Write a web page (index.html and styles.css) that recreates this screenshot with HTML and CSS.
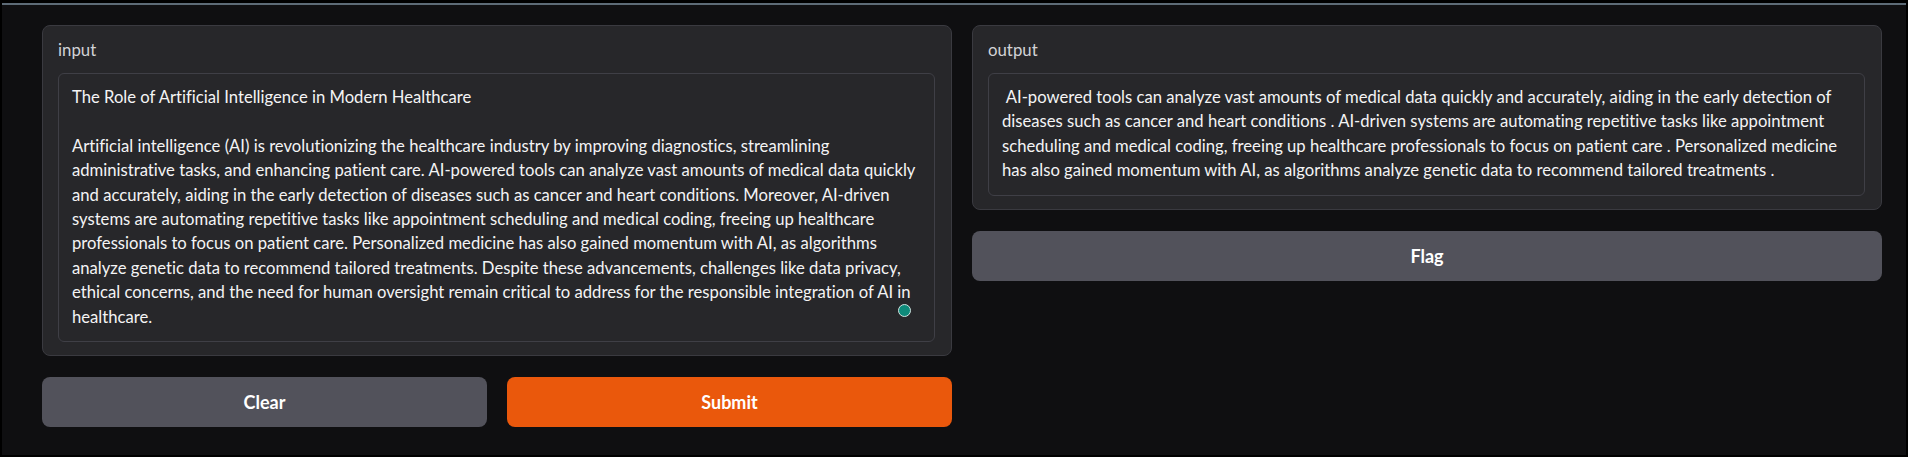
FILE: index.html
```html
<!DOCTYPE html>
<html lang="en">
<head>
<meta charset="utf-8">
<title>Gradio Interface</title>
<link rel="stylesheet" href="styles.css">
</head>
<body>
<div class="frame">
  <div class="topline"></div>
  <main class="app">
    <section class="column">
      <div class="block">
        <div class="label">input</div>
        <div class="textbox textbox-input">
          <div class="text">The Role of Artificial Intelligence in Modern Healthcare<br><br>Artificial intelligence (AI) is revolutionizing the healthcare industry by improving diagnostics, streamlining<br>administrative tasks, and enhancing patient care. AI-powered tools can analyze vast amounts of medical data quickly<br>and accurately, aiding in the early detection of diseases such as cancer and heart conditions. Moreover, AI-driven<br>systems are automating repetitive tasks like appointment scheduling and medical coding, freeing up healthcare<br>professionals to focus on patient care. Personalized medicine has also gained momentum with AI, as algorithms<br>analyze genetic data to recommend tailored treatments. Despite these advancements, challenges like data privacy,<br>ethical concerns, and the need for human oversight remain critical to address for the responsible integration of AI in<br>healthcare.</div>
          <span class="dot"></span>
        </div>
      </div>
      <div class="btn-row">
        <button class="btn btn-secondary">Clear</button>
        <button class="btn btn-primary">Submit</button>
      </div>
    </section>
    <section class="column">
      <div class="block">
        <div class="label">output</div>
        <div class="textbox textbox-output">
          <div class="text"> AI-powered tools can analyze vast amounts of medical data quickly and accurately, aiding in the early detection of<br>diseases such as cancer and heart conditions . AI-driven systems are automating repetitive tasks like appointment<br>scheduling and medical coding, freeing up healthcare professionals to focus on patient care . Personalized medicine<br>has also gained momentum with AI, as algorithms analyze genetic data to recommend tailored treatments .</div>
        </div>
      </div>
      <button class="btn btn-secondary btn-full">Flag</button>
    </section>
  </main>
</div>
</body>
</html>
```
FILE: styles.css
```css
* { box-sizing: border-box; }
html, body { margin: 0; padding: 0; background: #000; }
body {
  font-family: Lato, "Open Sans", sans-serif;
  font-variant-ligatures: none;
  color: #f4f4f5;
}
.frame {
  width: 1908px;
  height: 457px;
  background: #0f0f11;
  border: 2px solid #000;
  border-top-width: 3px;
  overflow: hidden;
}
.topline {
  height: 2px;
  background: #5d6b77;
}
.app {
  display: grid;
  grid-template-columns: 910px 910px;
  column-gap: 20px;
  padding: 20px 24px 0 40px;
  align-items: start;
}
.column {
  display: flex;
  flex-direction: column;
  gap: 21px;
}
.block {
  background: #27272a;
  border: 1px solid #3a3a40;
  border-radius: 8px;
  padding: 14px 16px 13px 15px;
}
.label {
  font-size: 16.8px;
  line-height: 20px;
  color: #d2d2d6;
  margin-bottom: 13px;
}
.textbox {
  position: relative;
  background: #27272a;
  border: 1px solid #3f3f46;
  border-radius: 6px;
  padding: 11px 13px 12px 13px;
}
.textbox-input { height: 269px; }
.text {
  font-size: 16.65px;
  line-height: 24.4px;
  white-space: pre;
  color: #f4f4f5;
}
.dot {
  position: absolute;
  right: 23px;
  bottom: 24px;
  width: 13px;
  height: 13px;
  border-radius: 50%;
  background: #0e8a7a;
  border: 1.5px solid #cfe3e0;
}
.btn-row {
  display: grid;
  grid-template-columns: 1fr 1fr;
  column-gap: 20px;
}
.btn {
  height: 50px;
  border: none;
  border-radius: 8px;
  font-family: Lato, "Open Sans", sans-serif;
  font-weight: 700;
  font-size: 18px;
  color: #ffffff;
  cursor: pointer;
}
.btn-secondary { background: #52525b; }
.btn-primary { background: #ea580c; }
.btn-full { width: 100%; }
```
